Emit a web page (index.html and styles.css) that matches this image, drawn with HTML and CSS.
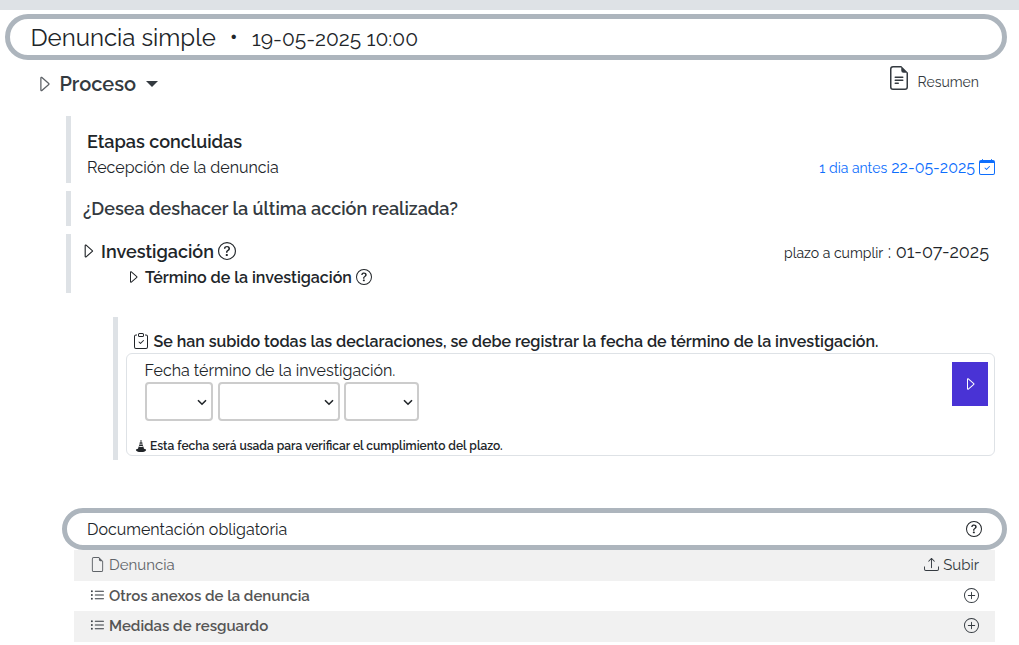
FILE: index.html
```html
<!DOCTYPE html>
<html lang="es">
<head>
<meta charset="utf-8">
<title>Denuncia simple</title>
<link rel="stylesheet" href="styles.css">
</head>
<body>
<svg class="defs" aria-hidden="true">
  <symbol id="caret" viewBox="0 0 16 16"><path fill-rule="evenodd" d="M6 12.796V3.204L11.481 8zm.659.753 5.48-4.796a1 1 0 0 0 0-1.506L6.66 2.451C6.011 1.885 5 2.345 5 3.204v9.592a1 1 0 0 0 1.659.753"/></symbol>
  <symbol id="question" viewBox="0 0 16 16"><path d="M8 15A7 7 0 1 1 8 1a7 7 0 0 1 0 14m0 1A8 8 0 1 0 8 0a8 8 0 0 0 0 16"/><path d="M5.255 5.786a.237.237 0 0 0 .241.247h.825c.138 0 .248-.113.266-.25.09-.656.54-1.134 1.342-1.134.686 0 1.314.343 1.314 1.168 0 .635-.374.927-.965 1.371-.673.489-1.206 1.06-1.168 1.987l.003.217a.25.25 0 0 0 .25.246h.811a.25.25 0 0 0 .25-.25v-.105c0-.718.273-.927 1.01-1.486.609-.463 1.244-.977 1.244-2.056 0-1.511-1.276-2.241-2.673-2.241-1.267 0-2.655.59-2.75 2.286m1.557 5.763c0 .533.425.927 1.01.927.609 0 1.028-.394 1.028-.927 0-.552-.42-.94-1.029-.94-.584 0-1.009.388-1.009.94"/></symbol>
  <symbol id="plus" viewBox="0 0 16 16"><path d="M8 15A7 7 0 1 1 8 1a7 7 0 0 1 0 14m0 1A8 8 0 1 0 8 0a8 8 0 0 0 0 16"/><path d="M8 4a.5.5 0 0 1 .5.5v3h3a.5.5 0 0 1 0 1h-3v3a.5.5 0 0 1-1 0v-3h-3a.5.5 0 0 1 0-1h3v-3A.5.5 0 0 1 8 4"/></symbol>
  <symbol id="list" viewBox="0 0 16 16"><path fill-rule="evenodd" d="M5 11.5a.5.5 0 0 1 .5-.5h9a.5.5 0 0 1 0 1h-9a.5.5 0 0 1-.5-.5m0-4a.5.5 0 0 1 .5-.5h9a.5.5 0 0 1 0 1h-9a.5.5 0 0 1-.5-.5m0-4a.5.5 0 0 1 .5-.5h9a.5.5 0 0 1 0 1h-9a.5.5 0 0 1-.5-.5m-3 1a1 1 0 1 0 0-2 1 1 0 0 0 0 2m0 4a1 1 0 1 0 0-2 1 1 0 0 0 0 2m0 4a1 1 0 1 0 0-2 1 1 0 0 0 0 2"/></symbol>
</svg>

<div class="topbar"></div>

<header class="pill pill-main">
  <h1 class="title">Denuncia simple</h1>
  <span class="bullet">•</span>
  <span class="title-date">19-05-2025 10:00</span>
</header>

<div class="process">
  <svg class="icon process-caret"><use href="#caret"/></svg>
  <span class="process-name">Proceso</span>
  <span class="dropdown-caret"></span>
  <a class="summary">
    <svg class="icon summary-icon" viewBox="0 0 16 16"><path d="M5.5 7a.5.5 0 0 0 0 1h5a.5.5 0 0 0 0-1zM5 9.5a.5.5 0 0 1 .5-.5h5a.5.5 0 0 1 0 1h-5a.5.5 0 0 1-.5-.5m0 2a.5.5 0 0 1 .5-.5h2a.5.5 0 0 1 0 1h-2a.5.5 0 0 1-.5-.5"/><path d="M9.5 0H4a2 2 0 0 0-2 2v12a2 2 0 0 0 2 2h8a2 2 0 0 0 2-2V4.5zm0 1v2A1.5 1.5 0 0 0 11 4.5h2V14a1 1 0 0 1-1 1H4a1 1 0 0 1-1-1V2a1 1 0 0 1 1-1z"/></svg>
    <span>Resumen</span>
  </a>
</div>

<section class="stage stage-done">
  <h2 class="stage-title">Etapas concluidas</h2>
  <div class="stage-row">
    <span class="stage-name">Recepción de la denuncia</span>
    <span class="early"><small>1 dia antes</small> 22-05-2025</span>
    <svg class="icon calendar" viewBox="0 0 16 16"><path d="M10.854 7.146a.5.5 0 0 1 0 .708l-3 3a.5.5 0 0 1-.708 0l-1.5-1.5a.5.5 0 1 1 .708-.708L7.5 9.793l2.646-2.647a.5.5 0 0 1 .708 0"/><path d="M3.5 0a.5.5 0 0 1 .5.5V1h8V.5a.5.5 0 0 1 1 0V1h1a2 2 0 0 1 2 2v11a2 2 0 0 1-2 2H2a2 2 0 0 1-2-2V3a2 2 0 0 1 2-2h1V.5a.5.5 0 0 1 .5-.5M1 4v10a1 1 0 0 0 1 1h12a1 1 0 0 0 1-1V4z"/></svg>
  </div>
</section>

<section class="stage stage-undo">¿Desea deshacer la última acción realizada?</section>

<section class="stage stage-current">
  <div class="current-row">
    <svg class="icon caret-18"><use href="#caret"/></svg>
    <span class="current-name">Investigación</span>
    <svg class="icon help-18"><use href="#question"/></svg>
    <span class="deadline"><small>plazo a cumplir</small> : 01-07-2025</span>
  </div>
  <div class="sub-row">
    <svg class="icon caret-16"><use href="#caret"/></svg>
    <span>Término de la investigación</span>
    <svg class="icon help-16"><use href="#question"/></svg>
  </div>
</section>

<section class="task">
  <div class="task-head">
    <svg class="icon clipboard" viewBox="0 0 16 16"><path fill-rule="evenodd" d="M10.854 7.146a.5.5 0 0 1 0 .708l-3 3a.5.5 0 0 1-.708 0l-1.5-1.5a.5.5 0 1 1 .708-.708L7.5 9.793l2.646-2.647a.5.5 0 0 1 .708 0"/><path d="M4 1.5H3a2 2 0 0 0-2 2V14a2 2 0 0 0 2 2h10a2 2 0 0 0 2-2V3.500a2 2 0 0 0-2-2h-1v1h1a1 1 0 0 1 1 1V14a1 1 0 0 1-1 1H3a1 1 0 0 1-1-1V3.500a1 1 0 0 1 1-1h1z"/><path d="M9.500 1a.5.5 0 0 1 .5.5v1a.5.5 0 0 1-.5.5h-3a.5.5 0 0 1-.5-.5v-1a.5.5 0 0 1 .5-.5zm-3-1A1.500 1.500 0 0 0 5 1.500v1A1.500 1.500 0 0 0 6.500 4h3A1.500 1.500 0 0 0 11 2.500v-1A1.500 1.500 0 0 0 9.500 0z"/></svg>
    <span>Se han subido todas las declaraciones, se debe registrar la fecha de término de la investigación.</span>
  </div>
  <form class="card">
    <div class="card-body">
      <div class="label">Fecha término de la investigación.</div>
      <div class="selects">
        <div class="select select-day"><svg class="chevron" viewBox="0 0 10 7"><path d="M1 1.200 5 5.200 9 1.200"/></svg></div>
        <div class="select select-month"><svg class="chevron" viewBox="0 0 10 7"><path d="M1 1.200 5 5.200 9 1.200"/></svg></div>
        <div class="select select-year"><svg class="chevron" viewBox="0 0 10 7"><path d="M1 1.200 5 5.200 9 1.200"/></svg></div>
      </div>
      <div class="note">
        <svg class="icon cone" viewBox="0 0 16 16"><path d="m6.700 1.880.400-1.010c.250-.75 1.550-.75 1.800 0l.400 1.010zM5.900 5h4.200l-.530-2.120H6.430zM5.200 7.620 5.600 6h4.800l.400 1.620C10 7.900 9 8 8 8s-2-.100-2.800-.380m-.350 1.100C5.700 9 6.800 9.200 8 9.200s2.300-.200 3.150-.480l.850 3.080c1.800.300 2.800.8 2.800 1.500C14.800 15 12 16 8 16s-6.800-1-6.800-2.700c0-.700 1-1.200 2.800-1.500z"/></svg>
        <span>Esta fecha será usada para verificar el cumplimiento del plazo.</span>
      </div>
    </div>
    <div class="submit"><svg class="icon caret-16"><use href="#caret"/></svg></div>
  </form>
</section>

<div class="pill pill-docs">
  <span>Documentación obligatoria</span>
  <svg class="icon help-16"><use href="#question"/></svg>
</div>

<div class="docs">
  <div class="doc doc-file">
    <svg class="icon doc-icon" viewBox="0 0 16 16"><path d="M14 4.500V14a2 2 0 0 1-2 2H4a2 2 0 0 1-2-2V2a2 2 0 0 1 2-2h5.500zm-3 0A1.500 1.500 0 0 1 9.500 3V1H4a1 1 0 0 0-1 1v12a1 1 0 0 0 1 1h8a1 1 0 0 0 1-1V4.500z"/></svg>
    <span class="doc-name">Denuncia</span>
    <span class="upload"><svg class="icon upload-icon" viewBox="0 0 16 16"><path d="M.5 9.900a.5.5 0 0 1 .5.5v2.500a1 1 0 0 0 1 1h12a1 1 0 0 0 1-1v-2.500a.5.5 0 0 1 1 0v2.500a2 2 0 0 1-2 2H2a2 2 0 0 1-2-2v-2.500a.5.5 0 0 1 .5-.5"/><path d="M7.646 1.146a.5.5 0 0 1 .708 0l3 3a.5.5 0 0 1-.708.708L8.500 2.707V11.500a.5.5 0 0 1-1 0V2.707L5.354 4.854a.5.5 0 1 1-.708-.708z"/></svg>Subir</span>
  </div>
  <div class="doc doc-group">
    <svg class="icon doc-icon"><use href="#list"/></svg>
    <span class="doc-name">Otros anexos de la denuncia</span>
    <svg class="icon add"><use href="#plus"/></svg>
  </div>
  <div class="doc doc-group">
    <svg class="icon doc-icon"><use href="#list"/></svg>
    <span class="doc-name">Medidas de resguardo</span>
    <svg class="icon add"><use href="#plus"/></svg>
  </div>
</div>
</body>
</html>
```
FILE: styles.css
```css
* { box-sizing: border-box; }
body {
  margin: 0;
  height: 645px;
  overflow: hidden;
  background: #fff;
  color: #212529;
  font: 400 16px/24px Raleway, Lato, sans-serif;
}
.defs { display: none; }
.icon { display: block; flex: none; fill: currentColor; }
h1, h2 { margin: 0; }
small { font-size: 14px; }

.topbar { height: 10px; background: #dee2e6; }

.pill {
  display: flex;
  align-items: center;
  border: 5px solid #adb5bd;
  border-radius: 50px;
}
.pill-main { height: 46px; margin: 4px 12px 0 5px; padding-left: 20.4px; }
.title { font-size: 24px; font-weight: 400; line-height: 29px; }
.bullet { width: 36px; text-align: center; font-size: 24px; }
.title-date { font-size: 21px; line-height: 29px; padding-top: 2px; }

.process {
  display: flex;
  align-items: center;
  height: 36px;
  margin-top: 6px;
  padding: 0 40px 0 34px;
  color: #343a40;
}
.process-caret { width: 20px; height: 20px; margin-right: 5.4px; opacity: .8; }
.process-name { font-size: 20px; font-weight: 600; }
.dropdown-caret {
  margin-left: 10px;
  border-top: 6px solid #343a40;
  border-left: 6px solid transparent;
  border-right: 6px solid transparent;
}
.summary {
  display: flex;
  align-items: center;
  margin: -12px 0 0 auto;
  font-size: 14px;
}
.summary-icon { width: 24px; height: 24px; margin-right: 6.500px; }
.summary span { padding-top: 8px; }

.stage { margin-left: 66px; border-left: 5px solid #dee2e6; }
.stage-done { height: 67px; margin-top: 14px; padding: 13px 24px 0 16px; }
.stage-title { font-size: 18px; font-weight: 600; line-height: 26px; }
.stage-row { display: flex; align-items: center; height: 26px; }
.early { margin-left: auto; color: #0d6efd; }
.calendar { width: 16px; height: 16px; margin: -2px 0 0 4px; color: #0d6efd; }
.stage-undo {
  height: 35px;
  margin-top: 8px;
  padding-left: 12px;
  color: #343a40;
  font-size: 18px;
  font-weight: 600;
  line-height: 35px;
}
.stage-current { height: 59px; margin-top: 8px; padding: 4px 30px 0 8px; }
.current-row { display: flex; align-items: center; height: 27px; font-size: 18px; }
.current-name { margin: 0 4px; font-weight: 600; }
.caret-16 { width: 16px; height: 16px; }
.caret-18 { width: 18px; height: 18px; margin-top: -1px; }
.help-18 { width: 18px; height: 18px; margin-top: -1px; }
.help-16 { width: 16px; height: 16px; }
.deadline { margin-left: auto; padding-top: 2px; }
.sub-row {
  display: flex;
  align-items: center;
  gap: 4px;
  height: 24px;
  padding-left: 46px;
  font-weight: 600;
}
.sub-row span { padding-top: 2px; }

.task {
  height: 143px;
  margin: 24px 24px 0 113px;
  padding: 12px 0 0 8px;
  border-left: 5px solid #dee2e6;
}
.task-head { display: flex; align-items: center; gap: 4px; height: 24px; padding-left: 7.4px; font-weight: 600; }
.task-head span { padding-top: 2px; }
.clipboard { width: 16px; height: 16px; }
.card {
  display: flex;
  justify-content: space-between;
  height: 103px;
  padding: 8px 6px 0 8px;
  border: 1px solid #dee2e6;
  border-radius: 6px;
}
.label { padding-left: 9.600px; line-height: 18px; }
.selects { display: flex; gap: 5px; margin-top: 2px; padding-left: 10px; }
.select {
  display: flex;
  align-items: center;
  justify-content: flex-end;
  height: 39px;
  padding: 1px 4px 0 0;
  border: 2px solid #ccc;
  border-radius: 4px;
}
.select-day { width: 68px; }
.select-month { width: 122px; }
.select-year { width: 75px; margin-left: -1px; }
.chevron { width: 10px; height: 7px; fill: none; stroke: #212529; stroke-width: 1.6; }
.note { display: flex; align-items: center; gap: 3px; height: 18px; margin-top: 16px; font-size: 12px; font-weight: 600; }
.cone { width: 12px; height: 12px; }
.submit {
  display: flex;
  align-items: center;
  justify-content: center;
  width: 36px;
  height: 44px;
  background: #4933d5;
  color: #fff;
}

.pill-docs { height: 42px; margin: 48px 12px 0 62px; padding: 0 20px; justify-content: space-between; }
.pill-docs span { padding-top: 2px; }

.docs { margin: 0 24px 0 74px; color: #343a40; font-size: 15px; }
.doc { display: flex; align-items: center; height: 31px; padding: 0 16px 2px; background: #f1f1f1; }
.doc:nth-child(2) { height: 30px; padding-bottom: 1px; background: #fff; }
.doc-icon { width: 15px; height: 15px; margin-right: 4px; }
.doc-file .doc-icon, .doc-file .doc-name { color: #5f6368; }
.doc-name { color: #555; }
.doc-group .doc-name { font-weight: 600; }
.upload { display: flex; align-items: center; gap: 4px; margin-left: auto; }
.upload-icon { width: 15px; height: 15px; }
.add { width: 15px; height: 15px; margin-left: auto; }
```
